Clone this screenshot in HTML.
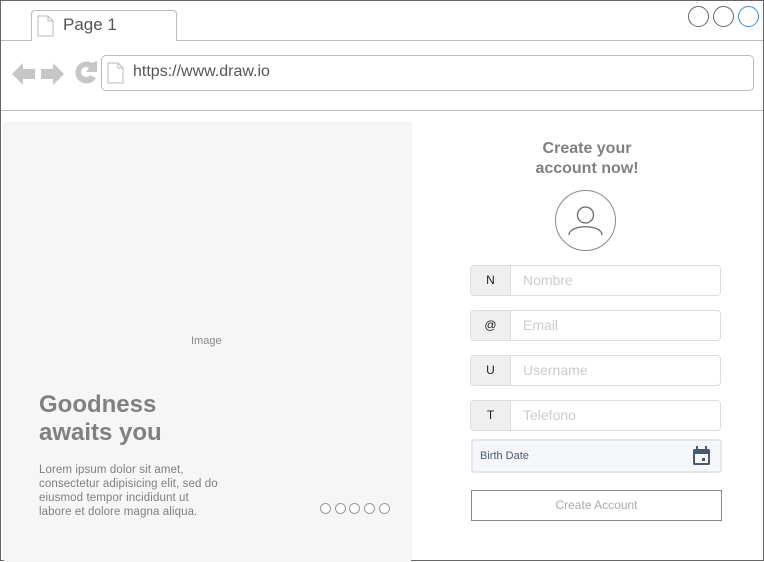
<!DOCTYPE html>
<html><head><meta charset="utf-8"><style>
*{box-sizing:border-box;margin:0;padding:0}
body{width:764px;height:562px;background:#fff;font-family:"Liberation Sans",sans-serif;position:relative;overflow:hidden}
.abs{position:absolute}
.frame{left:0;top:0;width:764px;height:561px;border:1px solid #666}
.field{left:470px;width:251px;height:31px;border:1px solid #ddd;border-radius:4px;background:#fff;overflow:hidden}
.field .pre{position:absolute;left:0;top:0;width:40px;height:100%;background:#efefef;border-right:1px solid #ddd;font-size:12px;color:#222;text-align:center;line-height:29px}
.field .ph{position:absolute;left:52px;top:0;line-height:29px;font-size:14px;color:#ccc}
.dot{width:11px;height:11px;border:1px solid #999;border-radius:50%;top:503px;background:#fff}
</style></head><body>
<div class="abs frame"></div>
<div class="abs" style="left:1px;top:40px;width:762px;height:1px;background:#bbb"></div>
<div class="abs" style="left:31px;top:10px;width:146px;height:31px;border:1px solid #bbb;border-bottom:none;border-radius:4px 4px 0 0;background:#fff"></div>
<svg class="abs" style="left:37px;top:15px" width="18" height="22" viewBox="0 0 18 22"><path d="M1 1h10l5 5v15H1z M11 1v5h5" fill="#fff" stroke="#bbb"/></svg>
<div class="abs" style="left:63px;top:15px;font-size:17px;color:#555">Page 1</div>
<div class="abs" style="left:688px;top:6px;width:21px;height:21px;border:1px solid #666;border-radius:50%"></div>
<div class="abs" style="left:713px;top:6px;width:21px;height:21px;border:1px solid #666;border-radius:50%"></div>
<div class="abs" style="left:738px;top:6px;width:21px;height:21px;border:1px solid #2a8ff7;border-radius:50%"></div>
<svg class="abs" style="left:10px;top:58px" width="90" height="32" viewBox="0 0 90 32">
<path d="M2 16l11-11v6h12v10H13v6z" fill="#c6c6c6"/>
<path d="M54 16l-11-11v6H31v10h12v6z" fill="#c6c6c6"/>
<path d="M82 5a11 11 0 1 0 4 15l-6-3a5 5 0 1 1 -1 -7l-3 4h11V3z" fill="#c6c6c6"/>
</svg>
<div class="abs" style="left:101px;top:55px;width:653px;height:36px;border:1px solid #bbb;border-radius:5px"></div>
<svg class="abs" style="left:107px;top:62px" width="18" height="22" viewBox="0 0 18 22"><path d="M1 1h10l5 5v15H1z M11 1v5h5" fill="#fff" stroke="#bbb"/></svg>
<div class="abs" style="left:133px;top:63px;font-size:16px;color:#555">https://www.draw.io</div>
<div class="abs" style="left:1px;top:110px;width:762px;height:1px;background:#bbb"></div>
<div class="abs" style="left:3px;top:122px;width:409px;height:440px;background:#f6f6f6;border:1px solid #f0f0f0;border-radius:4px"></div>
<div class="abs" style="left:191px;top:335px;font-size:11px;color:#888">Image</div>
<div class="abs" style="left:39px;top:391px;font-size:24px;font-weight:bold;color:#808080;line-height:28px">Goodness<br>awaits you</div>
<div class="abs" style="left:39px;top:463px;font-size:11.5px;color:#808080;line-height:14px;letter-spacing:0.1px">Lorem ipsum dolor sit amet,<br>consectetur adipisicing elit, sed do<br>eiusmod tempor incididunt ut<br>labore et dolore magna aliqua.</div>
<div class="abs dot" style="left:320px"></div>
<div class="abs dot" style="left:335px"></div>
<div class="abs dot" style="left:349px"></div>
<div class="abs dot" style="left:364px"></div>
<div class="abs dot" style="left:379px"></div>
<div class="abs" style="left:487px;top:139px;width:200px;text-align:center;font-size:16px;font-weight:bold;color:#808080;line-height:20px">Create your<br>account now!</div>
<div class="abs" style="left:555px;top:190px;width:61px;height:61px;border:1px solid #888;border-radius:50%"></div>
<svg class="abs" style="left:555px;top:190px" width="61" height="61" viewBox="0 0 61 61"><circle cx="30.5" cy="25" r="8" fill="none" stroke="#666" stroke-width="1.3"/><path d="M14 45c0-11 33-11 33 0" fill="none" stroke="#666" stroke-width="1.3"/></svg>
<div class="abs field" style="top:265px"><div class="pre">N</div><div class="ph">Nombre</div></div>
<div class="abs field" style="top:310px"><div class="pre">@</div><div class="ph">Email</div></div>
<div class="abs field" style="top:355px"><div class="pre">U</div><div class="ph">Username</div></div>
<div class="abs field" style="top:400px"><div class="pre">T</div><div class="ph">Telefono</div></div>
<div class="abs" style="left:471px;top:439px;width:251px;height:34px;border:2px solid #e3e6ea;border-radius:3px;background:#f5f7fa"></div>
<div class="abs" style="left:480px;top:450px;font-size:11px;color:#4a5872">Birth Date</div>
<svg class="abs" style="left:692px;top:446px" width="19" height="20" viewBox="0 0 19 20"><rect x="1" y="3" width="17" height="16" rx="1.5" fill="#4a5872"/><rect x="3" y="8" width="13" height="9" fill="#f5f7fa"/><rect x="4" y="0" width="2" height="4" fill="#4a5872"/><rect x="13" y="0" width="2" height="4" fill="#4a5872"/><rect x="10" y="12" width="3" height="3" fill="#4a5872"/></svg>
<div class="abs" style="left:471px;top:490px;width:251px;height:31px;border:1px solid #888;text-align:center;line-height:29px;font-size:12px;color:#aaa">Create Account</div>
</body></html>
